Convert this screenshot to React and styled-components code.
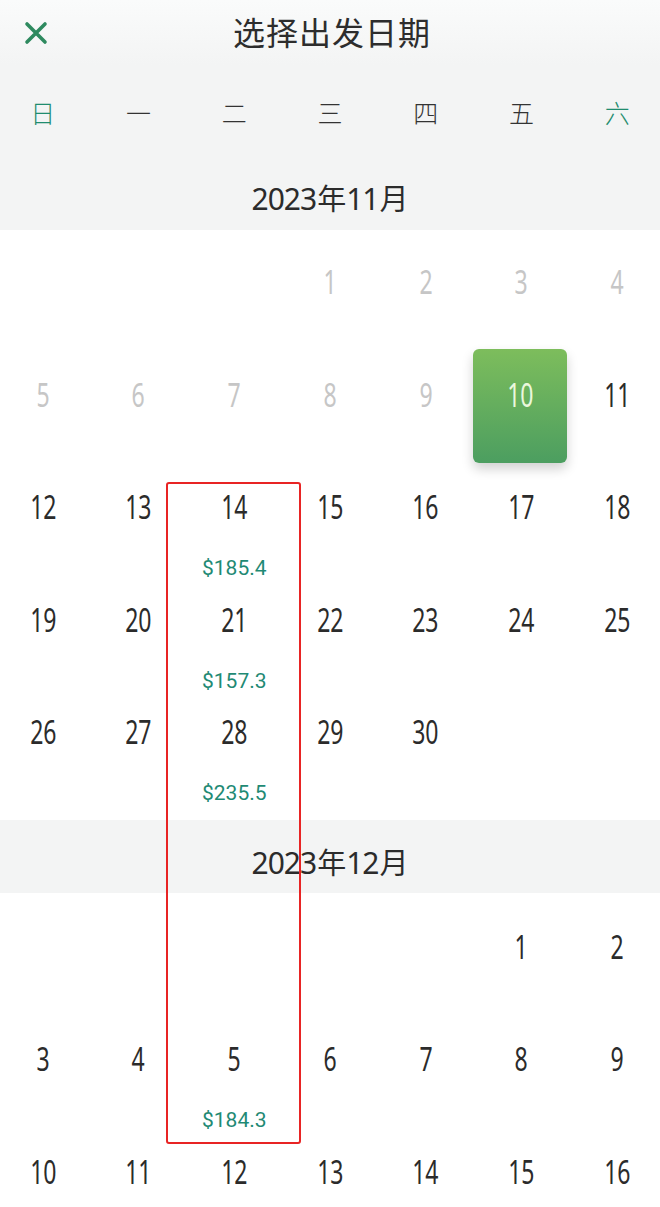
import styled, { createGlobalStyle } from "styled-components";

const GlobalStyle = createGlobalStyle`
  html, body {
    margin: 0;
    padding: 0;
    background: #ffffff;
    overflow-x: hidden;
  }
  body {
    font-family: "Noto Sans CJK SC", "Noto Sans", sans-serif;
    color: #2b2b2b;
  }
`;

const WEEKDAYS = ["日", "一", "二", "三", "四", "五", "六"];

// lastShown: the sheet is scrolled so only the first weeks of December fit
const MONTHS = [
  {
    year: 2023,
    month: 11,
    offset: 3,
    lastShown: 30,
    pastBefore: 10,
    selected: 10,
    prices: { 14: "$185.4", 21: "$157.3", 28: "$235.5" },
  },
  {
    year: 2023,
    month: 12,
    offset: 5,
    lastShown: 16,
    pastBefore: 0,
    selected: null,
    prices: { 5: "$184.3" },
  },
];

function CloseIcon() {
  return (
    <svg width="24" height="24" viewBox="0 0 24 24">
      <path
        d="M3 3 L21 21 M21 3 L3 21"
        stroke="#2e8a5f"
        strokeWidth="3.6"
        strokeLinecap="round"
        fill="none"
      />
    </svg>
  );
}

function MonthBlock({ data, first }) {
  const cells = [];
  for (let i = 0; i < data.offset; i++) cells.push(<Cell key={"e" + i} />);
  for (let d = 1; d <= data.lastShown; d++) {
    const isSel = d === data.selected;
    const isPast = d < data.pastBefore;
    cells.push(
      <Cell key={d} $selected={isSel}>
        <DayNum $past={isPast} $selected={isSel}>
          {d}
        </DayNum>
        {data.prices[d] && <Price>{data.prices[d]}</Price>}
      </Cell>
    );
  }
  return (
    <>
      <MonthBand $first={first}>
        <MonthLabel $first={first}>
          <Digits>{data.year}</Digits>年<Digits>{data.month}</Digits>月
        </MonthLabel>
      </MonthBand>
      <DayGrid $first={first}>{cells}</DayGrid>
    </>
  );
}

export default function App() {
  return (
    <Page>
      <GlobalStyle />
      <Header>
        <TopBar>
          <CloseButton>
            <CloseIcon />
          </CloseButton>
          <Title>选择出发日期</Title>
          <span />
        </TopBar>
        <WeekRow>
          {WEEKDAYS.map((w, i) => (
            <WeekDay key={w} $weekend={i === 0 || i === 6}>
              {w}
            </WeekDay>
          ))}
        </WeekRow>
      </Header>
      {MONTHS.map((m, i) => (
        <MonthBlock key={m.month} data={m} first={i === 0} />
      ))}
      <Highlight />
    </Page>
  );
}

const Page = styled.div`
  position: relative;
  width: 660px;
  height: 100vh;
  overflow: hidden;
`;

const Header = styled.div`
  background: linear-gradient(180deg, #fafbfb 0%, #f3f4f4 40%, #f3f4f4 100%);
`;

const TopBar = styled.div`
  display: grid;
  grid-template-columns: 1fr auto 1fr;
  align-items: center;
  height: 62px;
`;

const CloseButton = styled.div`
  display: flex;
  align-items: center;
  padding-left: 24px;
  padding-top: 4px;
`;

const Title = styled.div`
  font-size: 32px;
  line-height: 40px;
  color: #2d2d2d;
  letter-spacing: 1px;
  padding-left: 4px;
`;

const WeekRow = styled.div`
  display: grid;
  grid-template-columns: repeat(7, 1fr);
  margin: 0 -5px;
  height: 100px;
  align-items: center;
`;

const WeekDay = styled.div`
  text-align: center;
  font-size: 25px;
  font-weight: 300;
  color: ${(p) => (p.$weekend ? "#1f8c6e" : "#333333")};
`;

const MonthBand = styled.div`
  background: #f3f4f4;
  height: ${(p) => (p.$first ? "68px" : "73px")};
  margin-top: ${(p) => (p.$first ? "0" : "10px")};
  display: flex;
  justify-content: center;
  align-items: flex-start;
`;

const MonthLabel = styled.div`
  font-size: 29px;
  line-height: 40px;
  color: #2b2b2b;
  padding-top: ${(p) => (p.$first ? "15px" : "21px")};
`;

const Digits = styled.span`
  font-family: "Noto Sans", Roboto, sans-serif;
  font-size: 30px;
  letter-spacing: -1px;
  margin-right: 1px;
`;

const DayGrid = styled.div`
  display: grid;
  grid-template-columns: repeat(7, 1fr);
  grid-auto-rows: 112.5px;
  margin: 0 -5px;
  padding-top: ${(p) => (p.$first ? "17px" : "19px")};
`;

const Cell = styled.div`
  display: flex;
  flex-direction: column;
  align-items: center;
  align-self: start;
  box-sizing: border-box;
  height: ${(p) => (p.$selected ? "114px" : "112.5px")};
  margin: ${(p) => (p.$selected ? "-11px 2px 0 -1px" : "0")};
  padding-top: ${(p) => (p.$selected ? "30px" : "19px")};
  border-radius: 6px;
  background: ${(p) =>
    p.$selected ? "linear-gradient(180deg, #7dbd5c 0%, #4c9e60 100%)" : "transparent"};
  box-shadow: ${(p) => (p.$selected ? "0 6px 12px rgba(0, 0, 0, 0.18)" : "none")};
`;

const DayNum = styled.div`
  font-family: "Noto Sans", Roboto, sans-serif;
  font-size: 32px;
  line-height: 32px;
  transform: scaleX(0.72);
  color: ${(p) => (p.$selected ? "#eaf7dc" : p.$past ? "#c6c6c6" : "#2b2b2b")};
`;

const Price = styled.div`
  font-family: Roboto, "Noto Sans", sans-serif;
  font-size: 21px;
  line-height: 22px;
  color: #1f8a74;
  margin-top: 34px;
`;

const Highlight = styled.div`
  position: absolute;
  left: 166px;
  top: 482px;
  width: 135px;
  height: 662px;
  box-sizing: border-box;
  border: 2px solid #e82424;
  border-radius: 3px;
  pointer-events: none;
`;
